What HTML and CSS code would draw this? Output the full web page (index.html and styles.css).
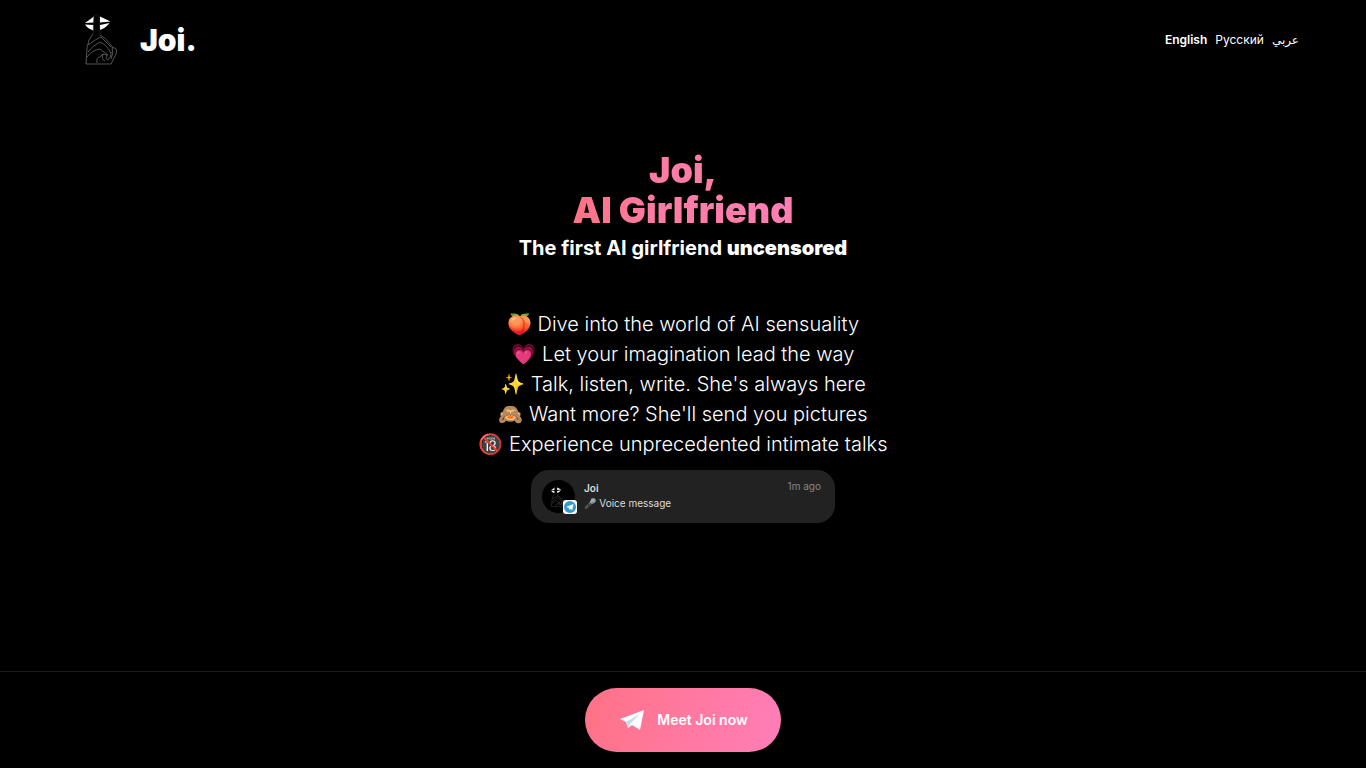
FILE: index.html
```html
<!DOCTYPE html>
<html lang="en">
<head>
<meta charset="utf-8">
<meta name="viewport" content="width=device-width, initial-scale=1">
<title>Joi, AI Girlfriend</title>
<link rel="stylesheet" href="styles.css">
</head>
<body>
<svg class="symbols" aria-hidden="true">
  <symbol id="hush" viewBox="0 0 42 60">
    <path fill="#fff" d="M5 13 14 6.500 13.500 12.500ZM5 14.500 13.500 15 13.500 20.500Q8 19 5 14.500ZM20 6.500 30.500 11.500 20 12.500ZM20 15 29.500 13Q26 18 20 20Z"/>
    <path fill="none" stroke="#292929" stroke-width="0.700" d="M13 24 14 7Q17 2 19 7L20 24"/>
    <path fill="none" stroke="#8b8b8b" stroke-width="0.600" d="M13 24 9 30 7 38 6 54H31L36 44Q38 37 33 38L31 35Q25 27 20 25M8 35Q14 30 21 27L31 37M8 42Q12 36 20 32Q26 34 31 43M7 47Q12 40 20 39L28 45M17 53Q16 47 20 47L23 44 27 45Q25 49 28 50Q32 46 31 42M23 44Q21 49 25 51M32 37Q34 43 31 49"/>
  </symbol>
</svg>
<header class="header">
  <a class="brand" href="#"><svg class="brand-logo" aria-hidden="true"><use href="#hush"/></svg><span>Joi.</span></a>
  <nav class="languages" aria-label="Language">
    <a class="current" href="#">English</a>
    <a href="#" lang="ru">Русский</a>
    <a href="#" lang="ar">عربي</a>
  </nav>
</header>
<main class="main">
  <h1 class="title">Joi,<br>AI Girlfriend</h1>
  <h2 class="subtitle">The first AI girlfriend <strong>uncensored</strong></h2>
  <ul class="features">
    <li>🍑 Dive into the world of AI sensuality</li>
    <li>💗 Let your imagination lead the way</li>
    <li>✨ Talk, listen, write. She's always here</li>
    <li>🙈 Want more? She'll send you pictures</li>
    <li>🔞 Experience unprecedented intimate talks</li>
  </ul>
  <section class="notice" aria-label="Notification">
    <div class="avatar">
      <svg class="avatar-logo" aria-hidden="true"><use href="#hush"/></svg>
      <svg class="avatar-badge" viewBox="0 0 14 14" aria-hidden="true"><rect width="14" height="14" rx="3" fill="#fff"/><circle cx="7" cy="7" r="6" fill="#369bcb"/><path fill="#fff" d="m3 7 7.500-3-1.300 6.300-2.200-1.600-1 1-.2-2Z"/></svg>
    </div>
    <div class="notice-text">
      <p class="sender">Joi</p>
      <p>🎤 Voice message</p>
    </div>
    <time class="time">1m ago</time>
  </section>
</main>
<footer class="footer">
  <a class="cta" href="#">
    <svg class="plane" viewBox="0 0 24 22" aria-hidden="true"><path fill="#fff" d="M0 10 24 1 20 21 12 16 8 19 6 13Z"/><path fill="#c4dce6" d="m6 13 14-8-10 10-2 4Z"/><path fill="#e5f0f4" d="m8 19 2-4 2 1Z"/></svg>
    <span>Meet Joi now</span>
  </a>
</footer>
</body>
</html>
```
FILE: styles.css
```css
* { box-sizing: border-box; }
body {
  margin: 0;
  min-height: 100vh;
  display: flex;
  flex-direction: column;
  background: #000;
  color: #fff;
  font-family: Inter, "DejaVu Sans", "Noto Color Emoji", sans-serif;
}
h1, h2, p, ul { margin: 0; padding: 0; }
a { color: inherit; text-decoration: none; }
.symbols { display: none; }
.header {
  display: flex;
  align-items: center;
  justify-content: space-between;
  padding: 10px 67px 10px 80px;
}
.brand {
  display: flex;
  align-items: center;
  gap: 18px;
  font-size: 30px;
  font-weight: 900;
}
.brand-logo { width: 42px; height: 60px; }
.languages { display: flex; gap: 8px; font-size: 12px; line-height: 16px; }
.current { font-weight: 600; }
.main {
  flex: 1;
  display: flex;
  flex-direction: column;
  align-items: center;
  padding: 70px 16px 32px;
  text-align: center;
}
.title {
  font-size: 36px;
  line-height: 40px;
  font-weight: 900;
  color: transparent;
  background: linear-gradient(to right, #ff7285, #ff7ba5 40%, #ff7eb5);
  -webkit-background-clip: text;
  background-clip: text;
}
.subtitle { margin-top: 4px; font-size: 20px; line-height: 28px; font-weight: 700; }
.subtitle strong { font-weight: 900; }
.features {
  margin-top: 47px;
  list-style: none;
  font-size: 20px;
  line-height: 30px;
  font-weight: 300;
}
.notice {
  display: flex;
  width: 100%;
  max-width: 304px;
  margin-top: 11px;
  padding: 10px 14px 10px 11px;
  border-radius: 18px;
  background: #222;
  text-align: left;
  font-size: 10px;
}
.avatar { position: relative; width: 33px; height: 33px; border-radius: 50%; background: #000; }
.avatar-logo { position: absolute; left: 7px; top: 5px; width: 17px; height: 24px; }
.avatar-badge { position: absolute; right: -2px; bottom: -1px; width: 14px; height: 14px; }
.notice-text { flex: 1; margin-left: 9px; padding-top: 1px; line-height: 15px; color: #ddd; }
.sender { font-weight: 600; }
.time { line-height: 13px; color: #888; }
.footer {
  display: flex;
  justify-content: center;
  padding: 16px;
  border-top: 1px solid #1c1c1c;
}
.cta {
  display: flex;
  align-items: center;
  gap: 13px;
  height: 64px;
  padding: 0 33px 0 35px;
  border-radius: 32px;
  background: linear-gradient(105deg, #ff7285, #ff7eb9);
  font-size: 14px;
  line-height: 16px;
  font-weight: 600;
}
.plane { width: 24px; height: 22px; }
```
